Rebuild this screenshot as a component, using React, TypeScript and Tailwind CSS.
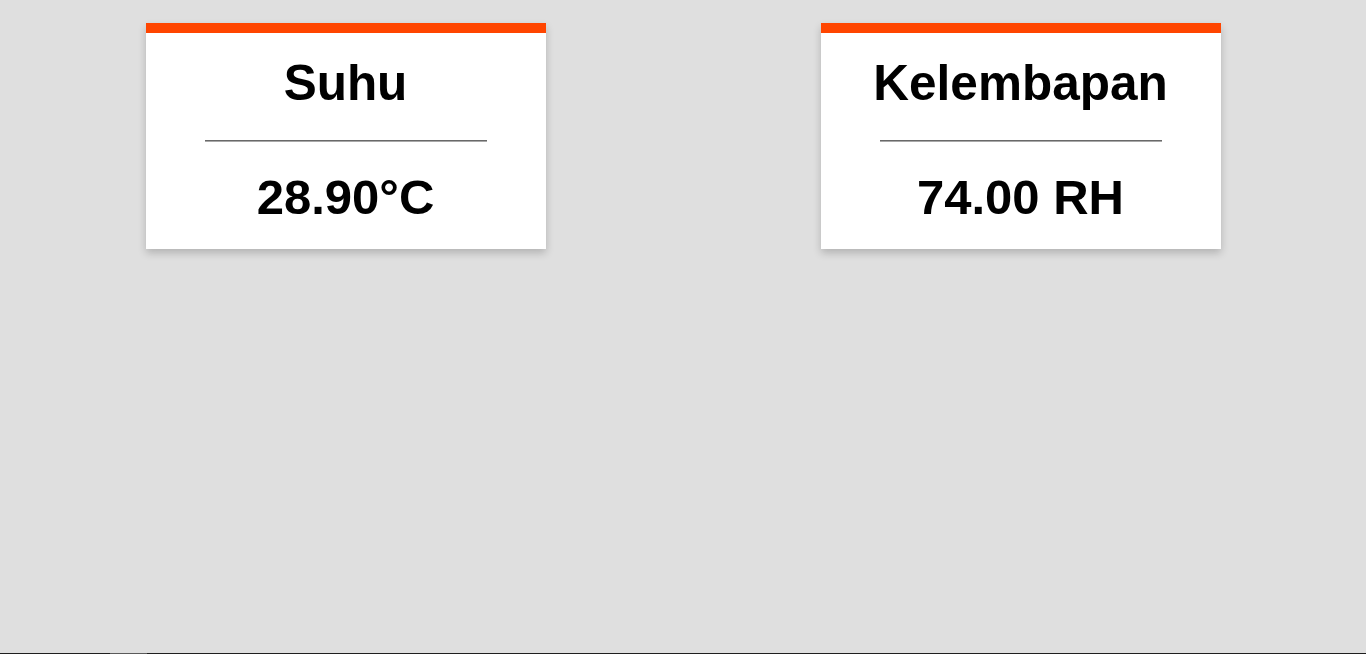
import React from "react";

interface CardProps {
	title: string
	value: string
}

function SensorCard({ title, value }: CardProps) {
	return (
		<div className="w-[400px] bg-white shadow-[0_4px_8px_0_rgba(0,0,0,0.2)]">
			<div className="h-[10px] bg-[#ff4500]" />
			<div className="flex flex-col items-center pt-[22px] pb-[24px]">
				<h2 className="text-[49.5px] leading-[56px] font-bold text-black">{title}</h2>
				<div className="mt-[29px] w-[282px] border-t border-t-[#696969] border-b border-b-[#a8a8a8]" />
				<p className="mt-[27px] text-[49px] leading-[56px] font-bold text-black">{value}</p>
			</div>
		</div>
	)
}

export default function App() {
	return (
		<div className="h-[654px] flex flex-col bg-[#dfdfdf] font-['Liberation_Sans',Arial,sans-serif]">
			<div className="flex-1 px-2 pt-[23px]">
				<div className="flex justify-around items-start">
					<SensorCard title="Suhu" value="28.90°C" />
					<SensorCard title="Kelembapan" value="74.00 RH" />
				</div>
			</div>
			<div className="h-px bg-[#1e1e1e] flex">
				<div className="ml-[110px] w-[37px] bg-[#5a5a5a]" />
			</div>
		</div>
	)
}
